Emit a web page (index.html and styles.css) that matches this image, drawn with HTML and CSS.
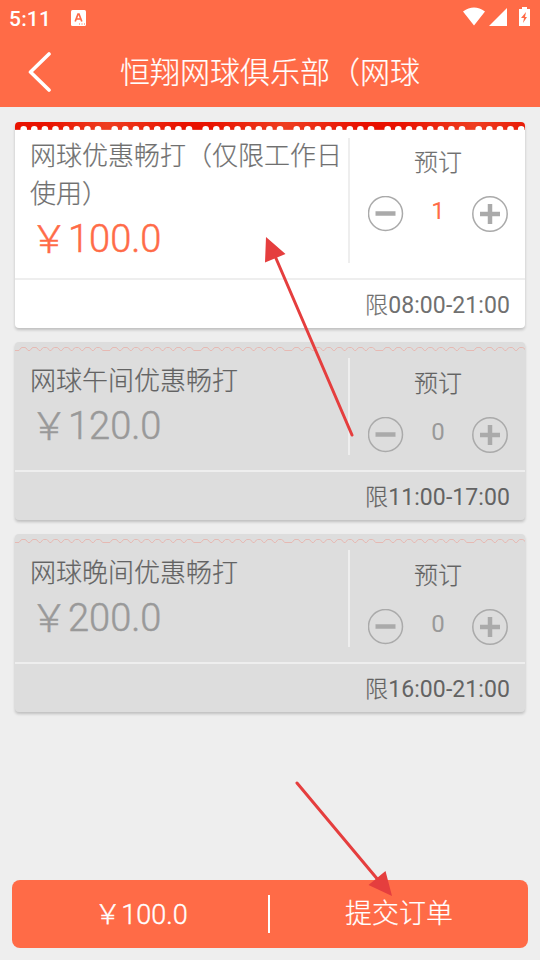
FILE: index.html
```html
<!DOCTYPE html>
<html lang="zh-CN">
<head>
<meta charset="utf-8">
<title>恒翔网球俱乐部</title>
<link rel="stylesheet" href="styles.css">
</head>
<body>
<svg class="defs" width="0" height="0" aria-hidden="true">
  <defs>
    <linearGradient id="ribbon" x1="0" x2="1" y1="0" y2="0">
      <stop offset="0" stop-color="#e81200"/><stop offset=".06" stop-color="#e81200"/><stop offset=".18" stop-color="#ee3e20"/>
      <stop offset=".33" stop-color="#e81200"/><stop offset=".38" stop-color="#e81200"/><stop offset=".53" stop-color="#ee3e20"/>
      <stop offset=".68" stop-color="#e81000"/><stop offset=".75" stop-color="#e81000"/><stop offset=".9" stop-color="#ee3e20"/>
      <stop offset="1" stop-color="#e81c08"/>
    </linearGradient>
    <pattern id="dots" width="91" height="8" patternUnits="userSpaceOnUse">
      <path d="M8.7 7.200h.01M19.3 7.200h.01M29.9 7.200h.01M40.5 7.200h.01M51.2 7.200h.01M61.8 7.200h.01M72.4 7.200h.01M83 7.200h.01" stroke="#fff" stroke-width="6.6" stroke-linecap="round"/>
      <path d="M0 7.5h91" stroke="#fff" stroke-opacity=".15"/>
    </pattern>
    <pattern id="waves" width="91" height="12" patternUnits="userSpaceOnUse">
      <path d="M0 8.500h4l2-2.500 1-.5h3l1 .5 2 2.500h2l2-2.500 1-.5h3l1 .5 2 2.500h1.600l2-2.500 1-.5h3l1 .5 2 2.500h1.600l2-2.500 1-.5h3l1 .5 2 2.500h1.600l2-2.500 1-.5h3l1 .5 2 2.500h1.600l2-2.500 1-.5h3l1 .5 2 2.500h1.600l2-2.500 1-.5h3l1 .5 2 2.500h1.600l2-2.500 1-.5h3l1 .5 2 2.500h7" fill="none" stroke="#e6b9b3" stroke-width="1"/>
    </pattern>
    <symbol id="minus" viewBox="0 0 36 36"><circle cx="17.500" cy="17.500" r="17"/><path d="M7.500 17.500h20" stroke-width="4.500"/></symbol>
    <symbol id="plus" viewBox="0 0 36 36"><circle cx="18" cy="18" r="17.200"/><path d="M8 18h20M18 8v20" stroke-width="4.500"/></symbol>
  </defs>
</svg>
<div class="screen">
  <div class="status">
    <span class="clock">5:11</span>
    <svg class="badge" width="15" height="16" viewBox="0 0 15 16"><rect width="15" height="16" rx="1.5" fill="#fff"/><path d="M4.2 11.5 7 4h1l2.8 7.500M5.300 9h4.400" fill="none" stroke="#ff6b47" stroke-width="1.700"/><path d="M8 14h1M10.500 14h1M13 14h1" stroke="#ff6b47"/></svg>
    <svg class="signals" width="68" height="20" viewBox="0 0 68 20" fill="#fff"><path d="M0 4.500Q11-3.500 22 4.500L11 18.500zM26 19 44 1v18zM56 2h3V0h5v2h3v17H56z"/><path d="m63 5-5 6h3l-1 5 4-6h-2z" fill="#ff6b47"/></svg>
  </div>
  <header class="bar">
    <svg class="back" width="24" height="42" viewBox="0 0 24 42"><path d="M21 3 2.500 21 21 39" fill="none" stroke="#fff" stroke-width="3.600" stroke-linecap="round" stroke-linejoin="round"/></svg>
    <h1 class="title cjk">恒翔网球俱乐部（网球</h1>
  </header>
  <main class="list">
    <section class="card active">
      <svg class="edge" width="510" height="8"><rect width="510" height="8" fill="url(#ribbon)"/><rect width="510" height="8" fill="url(#dots)"/></svg>
      <div class="body">
        <div class="info"><h2 class="name cjk">网球优惠畅打（仅限工作日使用）</h2><div class="price">￥100.0</div></div>
        <div class="book"><div class="label cjk">预订</div><div class="stepper"><svg class="btn"><use href="#minus"/></svg><span class="count">1</span><svg class="btn plus"><use href="#plus"/></svg></div></div>
      </div>
      <div class="limit"><span class="cjk">限</span>08:00-21:00</div>
    </section>
    <section class="card">
      <svg class="edge" width="510" height="8"><rect width="510" height="12" fill="url(#waves)"/></svg>
      <div class="body">
        <div class="info"><h2 class="name cjk">网球午间优惠畅打</h2><div class="price">￥120.0</div></div>
        <div class="book"><div class="label cjk">预订</div><div class="stepper"><svg class="btn"><use href="#minus"/></svg><span class="count">0</span><svg class="btn plus"><use href="#plus"/></svg></div></div>
      </div>
      <div class="limit"><span class="cjk">限</span>11:00-17:00</div>
    </section>
    <section class="card">
      <svg class="edge" width="510" height="8"><rect width="510" height="12" fill="url(#waves)"/></svg>
      <div class="body">
        <div class="info"><h2 class="name cjk">网球晚间优惠畅打</h2><div class="price">￥200.0</div></div>
        <div class="book"><div class="label cjk">预订</div><div class="stepper"><svg class="btn"><use href="#minus"/></svg><span class="count">0</span><svg class="btn plus"><use href="#plus"/></svg></div></div>
      </div>
      <div class="limit"><span class="cjk">限</span>16:00-21:00</div>
    </section>
  </main>
  <footer class="order"><div class="total">￥100.0</div><div class="submit cjk">提交订单</div></footer>
  <svg class="arrows" width="540" height="960" viewBox="0 0 540 960"><path d="M352 435 275 256M297 783l82 98" stroke="#e53e3e" stroke-width="3" stroke-linecap="round"/><path d="m266 237 19.500 17-20.500 8.500zM392 896l-23.500-11 17-14z" fill="#e53e3e"/></svg>
</div>
</body>
</html>
```
FILE: styles.css
```css
* { box-sizing: border-box; }
body { margin: 0; font-family: Roboto, "Noto Sans CJK SC", sans-serif; font-weight: 400; color: #757575; }
.defs { position: absolute; }
.screen { position: relative; width: 540px; height: 960px; background: #eee; display: flex; flex-direction: column; overflow: hidden; }
.cjk { font-weight: 300; -webkit-text-stroke: .2px currentColor; }
.status { height: 37px; background: #ff6b47; color: #fff; display: flex; align-items: center; padding: 0 9px 0 9px; flex: none; }
.clock { font-size: 21px; font-weight: 500; letter-spacing: .2px; width: 62px; }
.badge { margin-top: -1px; }
.signals { margin-left: auto; margin-top: -3px; }
.bar { height: 70px; background: #ff6b47; flex: none; display: flex; align-items: center; padding-left: 28px; }
.title { margin: 2px 0 0 68px; font-size: 30px; line-height: 44px; color: #fff; }
.list { padding: 15px 15px 0; display: flex; flex-direction: column; gap: 14px; flex: 1; }
.card { width: 510px; background: #ddd; border-radius: 4px; box-shadow: 0 2px 3px rgba(0,0,0,.2); color: #636363; }
.active { background: #fff; color: #707070; }
.edge { display: block; border-radius: 4px 4px 0 0; overflow: visible; }
.active .edge { overflow: hidden; }
.body { display: flex; min-height: 122px; border-bottom: 2px solid #eee; padding: 8px 0 15px; }
.active .body { height: 150px; }
.info { width: 335px; padding-left: 15px; border-right: 2px solid #eee; }
.name { margin: 4px 0 0; font-size: 26px; line-height: 38px; }
.active .name { margin-top: -1px; }
.price { font-size: 38px; line-height: 46px; margin-top: 3px; color: #999; font-weight: 300; -webkit-text-stroke: .5px currentColor; }
.active .price { color: #ff6b47; }
.book { width: 175px; padding: 9px 17px 0 18px; }
.active .book { padding-top: 8px; }
.label { font-size: 24px; line-height: 34px; text-align: center; }
.stepper { display: flex; justify-content: space-between; align-items: center; margin-top: 16px; height: 36px; }
.btn { width: 36px; height: 36px; fill: none; stroke: #aaa; stroke-width: 1.5; }
.count { font-size: 24px; color: #999; margin-top: -6px; }
.active .count { color: #ff6b47; }
.limit { height: 48px; line-height: 51px; padding-right: 15px; text-align: right; font-size: 23px; letter-spacing: .08px; }
.order { height: 68px; margin: 0 12px 12px; border-radius: 8px; background: #ff6b47; color: #fff; font-size: 27px; display: flex; align-items: center; flex: none; }
.total { width: 258px; padding-left: 2px; height: 38px; line-height: 40px; border-right: 2px solid #fff; text-align: center; font-weight: 300; -webkit-text-stroke: .35px currentColor; }
.submit { flex: 1; text-align: center; line-height: 40px; }
.arrows { position: absolute; left: 0; top: 0; }
```
